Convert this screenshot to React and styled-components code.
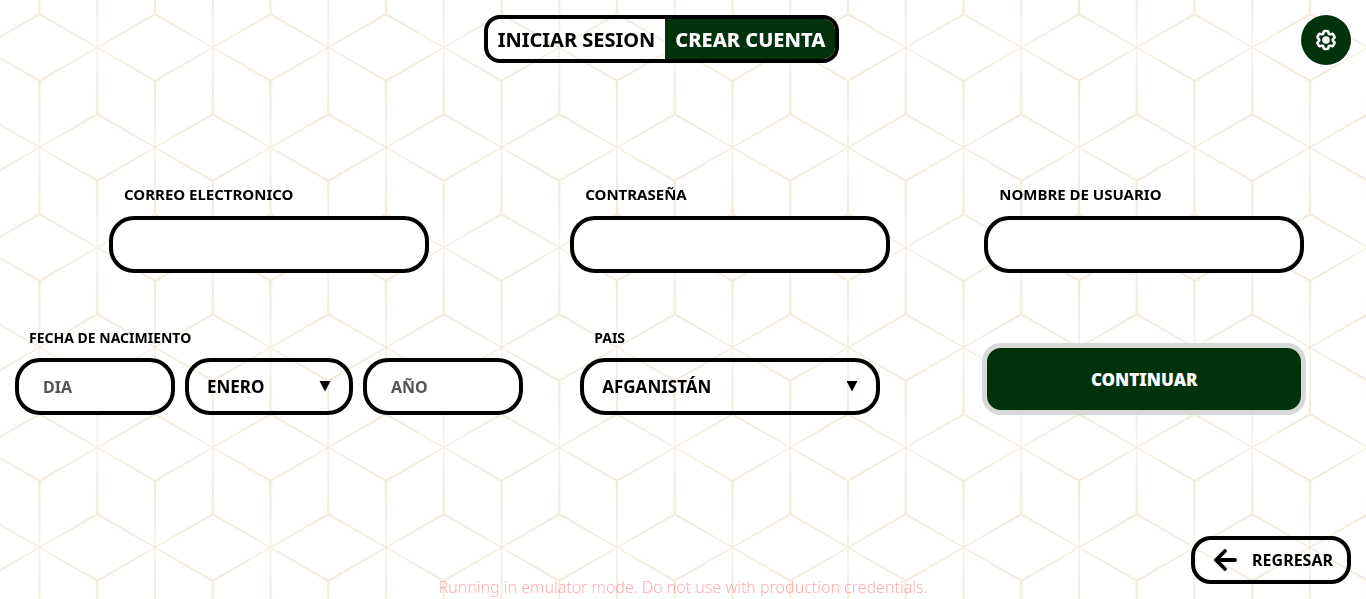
import * as React from "react"
import styled, { createGlobalStyle } from "styled-components"

const GlobalStyle = createGlobalStyle`
  :root {
    --green: #00320c;
    --ink: #000;
    --line: #f3ecde;
    --ring: #d9d9d9;
  }

  * {
    box-sizing: border-box;
  }

  body {
    margin: 0;
    background: #fff;
    color: var(--ink);
    font-family: "Noto Sans", sans-serif;
  }

  button,
  input,
  select {
    font-family: inherit;
  }
`

const Page = styled.div`
  display: flex;
  flex-direction: column;
  min-height: 100vh;
`

const Backdrop = styled.svg`
  position: fixed;
  inset: 0;
  z-index: -1;
  width: 100%;
  height: 100%;
`

const Header = styled.header`
  display: flex;
  align-items: flex-start;
  padding: 15px 15px 0 22px;
`

const ToggleArea = styled.div`
  display: flex;
  flex: 1;
  justify-content: center;
`

const Toggle = styled.div`
  display: flex;
  height: 48px;
  overflow: hidden;
  border: 4px solid var(--ink);
  border-radius: 16px;
`

const ToggleButton = styled.button`
  padding: 0 10px;
  border: 0;
  background: ${(props) => (props.$active ? "var(--green)" : "transparent")};
  color: ${(props) => (props.$active ? "#fff" : "var(--ink)")};
  font-size: 20px;
  font-weight: ${(props) => (props.$active ? 800 : 700)};
  white-space: nowrap;
  cursor: pointer;
`

const SettingsButton = styled.button`
  display: flex;
  align-items: center;
  justify-content: center;
  width: 50px;
  height: 50px;
  padding: 0;
  border: 0;
  border-radius: 50%;
  background: var(--green);
  color: #fff;
  cursor: pointer;
`

const Form = styled.form`
  display: grid;
  flex: 1;
  grid-template-columns: auto 13fr 15fr;
  row-gap: 55px;
  align-content: center;
  align-items: end;
  justify-items: center;
  padding-bottom: 2px;
`

const Field = styled.div`
  display: flex;
  flex-direction: column;
  width: ${(props) => props.$width || "320px"};
`

const DateField = styled.fieldset`
  margin: 0 15px;
  padding: 0;
  border: 0;
`

const Label = styled.label`
  margin-bottom: ${(props) => (props.$small ? "10px" : "12px")};
  padding-left: ${(props) => (props.$small ? "14px" : "15px")};
  font-size: ${(props) => (props.$small ? "14px" : "15px")};
  font-weight: 700;
  line-height: 20px;
`

const DateRow = styled.div`
  display: flex;
  gap: 10px;
`

const Input = styled.input`
  width: ${(props) => props.$width || "100%"};
  height: 57px;
  padding: 0 24px;
  border: 4px solid var(--ink);
  border-radius: 25px;
  background: #fff;
  font-size: 16px;
  font-weight: 700;

  &::placeholder {
    color: #555;
    opacity: 1;
  }
`

const SelectBox = styled.div`
  display: grid;
  align-items: center;
  width: ${(props) => props.$width || "100%"};

  > * {
    grid-area: 1 / 1;
  }

  svg {
    justify-self: end;
    margin-right: 22px;
    pointer-events: none;
  }
`

const Select = styled.select`
  width: 100%;
  height: 57px;
  padding: 0 40px 0 18px;
  border: 4px solid var(--ink);
  border-radius: 25px;
  background: transparent;
  color: var(--ink);
  font-size: 17px;
  font-weight: 700;
  appearance: none;
`

const SubmitButton = styled.button`
  width: 324px;
  height: 72px;
  border: 5px solid var(--ring);
  border-radius: 19px;
  background: var(--green);
  color: #fff;
  font-size: 17px;
  font-weight: 900;
  cursor: pointer;
`

const Footer = styled.footer`
  display: flex;
  justify-content: flex-end;
  padding: 0 15px 15px;
`

const BackButton = styled.button`
  display: flex;
  align-items: center;
  justify-content: space-between;
  width: 160px;
  height: 48px;
  padding: 0 14px 0 18px;
  border: 4px solid var(--ink);
  border-radius: 20px;
  background: transparent;
  color: var(--ink);
  font-size: 16px;
  font-weight: 700;
  cursor: pointer;
`

const EmulatorWarning = styled.p`
  position: fixed;
  right: 0;
  bottom: 0;
  left: 0;
  margin: 0;
  color: rgba(255, 0, 0, 0.34);
  font-size: 16px;
  font-weight: 300;
  line-height: 24px;
  text-align: center;
  pointer-events: none;
`

// One tile of the cube pattern. Every star has six spokes that get
// thicker towards the corners where three of them meet.
const TILE_W = 115.5
const TILE_H = 200
const SPOKE = 66.6

const STARS = [
  [0, -52.5],
  [TILE_W, -52.5],
  [TILE_W / 2, 47.5],
  [0, 147.5],
  [TILE_W, 147.5],
  [TILE_W / 2, 247.5],
]

const SPOKE_ANGLES = [0, 60, 120, 180, 240, 300]

const CubePattern = () => (
  <Backdrop aria-hidden="true">
    <defs>
      <pattern
        id="cubes"
        x="39.5"
        y="0"
        width={TILE_W}
        height={TILE_H}
        patternUnits="userSpaceOnUse"
      >
        {STARS.map(([x, y]) =>
          SPOKE_ANGLES.map((angle) => (
            <polygon
              key={`${x} ${y} ${angle}`}
              points={`-0.6,0 0.6,0 1.2,${SPOKE} -1.2,${SPOKE}`}
              transform={`translate(${x} ${y}) rotate(${angle})`}
              fill="var(--line)"
            />
          ))
        )}
      </pattern>
    </defs>
    <rect width="100%" height="100%" fill="url(#cubes)" />
  </Backdrop>
)

const GearIcon = () => (
  <svg width="24" height="24" viewBox="0 0 24 24" fill="none" aria-hidden="true">
    <path
      stroke="currentColor"
      strokeWidth="2.6"
      strokeLinejoin="round"
      d="M9.594 3.94c.09-.542.56-.94 1.11-.94h2.593c.55 0 1.02.398 1.11.94l.213 1.281c.063.374.313.686.645.87.074.04.147.083.22.127.325.196.72.257 1.075.124l1.217-.456a1.125 1.125 0 0 1 1.37.49l1.296 2.247a1.125 1.125 0 0 1-.26 1.431l-1.003.827c-.293.241-.438.613-.43.992a7.723 7.723 0 0 1 0 .255c-.008.378.137.75.43.991l1.004.827c.424.35.534.955.26 1.43l-1.298 2.247a1.125 1.125 0 0 1-1.369.491l-1.217-.456c-.355-.133-.75-.072-1.076.124a6.47 6.47 0 0 1-.22.128c-.331.183-.581.495-.644.869l-.213 1.281c-.09.543-.56.94-1.11.94h-2.594c-.55 0-1.019-.398-1.11-.94l-.213-1.281c-.062-.374-.312-.686-.644-.87a6.52 6.52 0 0 1-.22-.127c-.325-.196-.72-.257-1.076-.124l-1.217.456a1.125 1.125 0 0 1-1.369-.49l-1.297-2.247a1.125 1.125 0 0 1 .26-1.431l1.004-.827c.292-.24.437-.613.43-.991a6.932 6.932 0 0 1 0-.255c.007-.38-.138-.751-.43-.992l-1.004-.827a1.125 1.125 0 0 1-.26-1.43l1.297-2.247a1.125 1.125 0 0 1 1.37-.491l1.216.456c.356.133.751.072 1.076-.124.072-.044.146-.086.22-.128.332-.183.582-.495.644-.869l.214-1.28Z"
    />
    <circle cx="12" cy="12" r="3.8" fill="currentColor" />
  </svg>
)

const ArrowLeftIcon = () => (
  <svg width="25" height="24" viewBox="0 0 25 24" fill="none" aria-hidden="true">
    <path
      d="M12 3 3 12l9 9M3 12h19"
      stroke="currentColor"
      strokeWidth="3.8"
      strokeLinecap="round"
      strokeLinejoin="round"
    />
  </svg>
)

const CaretIcon = () => (
  <svg width="12" height="14" viewBox="0 0 12 14" aria-hidden="true">
    <path d="M0.5 1h11L6 11.5z" fill="currentColor" />
  </svg>
)

export default function App() {
  const [mode, setMode] = React.useState("signup")

  return (
    <Page>
      <GlobalStyle />
      <CubePattern />

      <Header>
        <ToggleArea>
          <Toggle>
            <ToggleButton
              type="button"
              $active={mode === "login"}
              onClick={() => setMode("login")}
            >
              INICIAR SESION
            </ToggleButton>
            <ToggleButton
              type="button"
              $active={mode === "signup"}
              onClick={() => setMode("signup")}
            >
              CREAR CUENTA
            </ToggleButton>
          </Toggle>
        </ToggleArea>
        <SettingsButton type="button" aria-label="Ajustes">
          <GearIcon />
        </SettingsButton>
      </Header>

      <Form onSubmit={(e) => e.preventDefault()}>
        <Field>
          <Label htmlFor="email">CORREO ELECTRONICO</Label>
          <Input id="email" type="email" />
        </Field>
        <Field>
          <Label htmlFor="password">CONTRASEÑA</Label>
          <Input id="password" type="password" />
        </Field>
        <Field>
          <Label htmlFor="username">NOMBRE DE USUARIO</Label>
          <Input id="username" type="text" />
        </Field>

        <DateField>
          <Label as="legend" $small>
            FECHA DE NACIMIENTO
          </Label>
          <DateRow>
            <Input $width="160px" placeholder="DIA" aria-label="Dia" />
            <SelectBox $width="168px">
              <Select aria-label="Mes">
                <option>ENERO</option>
              </Select>
              <CaretIcon />
            </SelectBox>
            <Input $width="160px" placeholder="AÑO" aria-label="Año" />
          </DateRow>
        </DateField>
        <Field $width="300px">
          <Label htmlFor="country" $small>
            PAIS
          </Label>
          <SelectBox>
            <Select id="country">
              <option>AFGANISTÁN</option>
            </Select>
            <CaretIcon />
          </SelectBox>
        </Field>
        <SubmitButton type="submit">CONTINUAR</SubmitButton>
      </Form>

      <Footer>
        <BackButton type="button">
          <ArrowLeftIcon />
          REGRESAR
        </BackButton>
      </Footer>

      <EmulatorWarning>
        Running in emulator mode. Do not use with production credentials.
      </EmulatorWarning>
    </Page>
  )
}
